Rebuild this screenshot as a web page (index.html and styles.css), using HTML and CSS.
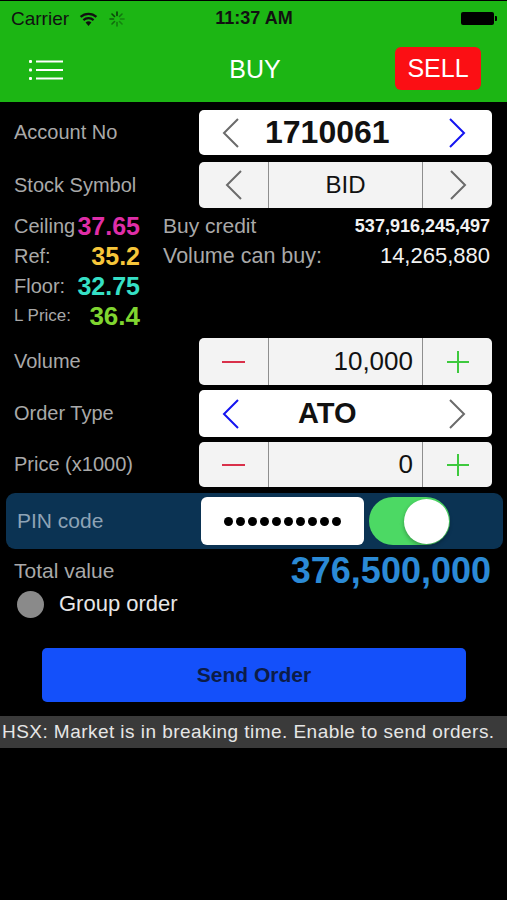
FILE: index.html
```html
<!DOCTYPE html>
<html lang="en">
<head>
    <meta charset="UTF-8">
    <meta name="viewport" content="width=device-width, initial-scale=1.0">
    <title>Buy Order</title>
    <link rel="stylesheet" href="styles.css">
</head>
<body>
    <header class="top">
        <div class="status">
            <div class="status-left">
                <span class="carrier">Carrier</span>
                <svg class="wifi" width="19" height="15" viewBox="0 0 19 15">
                    <path d="M9.5 15 L6.6 11.6 A4.4 4.4 0 0 1 12.4 11.6 Z" fill="#111"/>
                    <path d="M4.4 9.1 A7.6 7.6 0 0 1 14.6 9.1" stroke="#111" stroke-width="2.2" fill="none"/>
                    <path d="M1.6 5.9 A11.6 11.6 0 0 1 17.4 5.9" stroke="#111" stroke-width="2.2" fill="none"/>
                </svg>
                <svg class="spinner" width="16" height="16" viewBox="0 0 16 16">
                    <g stroke="#0a3a0a" stroke-width="1.6" stroke-linecap="round">
                        <line x1="8" y1="1" x2="8" y2="4.5"/>
                        <line x1="8" y1="11.5" x2="8" y2="15" opacity="0.5"/>
                        <line x1="1" y1="8" x2="4.5" y2="8" opacity="0.7"/>
                        <line x1="11.5" y1="8" x2="15" y2="8" opacity="0.4"/>
                        <line x1="3" y1="3" x2="5.5" y2="5.5" opacity="0.9"/>
                        <line x1="10.5" y1="10.5" x2="13" y2="13" opacity="0.4"/>
                        <line x1="13" y1="3" x2="10.5" y2="5.5" opacity="0.5"/>
                        <line x1="3" y1="13" x2="5.5" y2="10.5" opacity="0.6"/>
                    </g>
                </svg>
            </div>
            <span class="clock">11:37 AM</span>
            <div class="status-right">
                <span class="battery"></span>
            </div>
        </div>
        <nav class="nav">
            <svg class="menu" width="34" height="20" viewBox="0 0 34 20">
                <g fill="#fff">
                    <rect x="0" y="0" width="3" height="3" rx="1"/>
                    <rect x="0" y="8.5" width="3" height="3" rx="1"/>
                    <rect x="0" y="17" width="3" height="3" rx="1"/>
                </g>
                <g stroke="#fff" stroke-width="2">
                    <line x1="7" y1="1.5" x2="34" y2="1.5"/>
                    <line x1="7" y1="10" x2="34" y2="10"/>
                    <line x1="7" y1="18.5" x2="34" y2="18.5"/>
                </g>
            </svg>
            <span class="nav-title">BUY</span>
            <div class="nav-right">
                <button class="sell-btn">SELL</button>
            </div>
        </nav>
    </header>

    <main class="form">
        <div class="row row-account">
            <span class="label">Account No</span>
            <div class="picker picker-white">
                <svg class="chev" width="18" height="30" viewBox="0 0 18 30"><polyline points="16,1 2,15 16,29" stroke="#6b6b6b" stroke-width="2" fill="none"/></svg>
                <span class="picker-value account-value">1710061</span>
                <svg class="chev chev-right" width="18" height="30" viewBox="0 0 18 30"><polyline points="2,1 16,15 2,29" stroke="#1414f0" stroke-width="2" fill="none"/></svg>
            </div>
        </div>

        <div class="row row-stock">
            <span class="label">Stock Symbol</span>
            <div class="stepper">
                <div class="cell"><svg width="18" height="30" viewBox="0 0 18 30"><polyline points="16,1 2,15 16,29" stroke="#6b6b6b" stroke-width="2" fill="none"/></svg></div>
                <div class="cell cell-mid symbol">BID</div>
                <div class="cell"><svg width="18" height="30" viewBox="0 0 18 30"><polyline points="2,1 16,15 2,29" stroke="#6b6b6b" stroke-width="2" fill="none"/></svg></div>
            </div>
        </div>

        <div class="info">
            <div class="prices">
                <div class="price-line"><span class="label">Ceiling</span><span class="num ceiling">37.65</span></div>
                <div class="price-line"><span class="label">Ref:</span><span class="num ref">35.2</span></div>
                <div class="price-line"><span class="label">Floor:</span><span class="num floor">32.75</span></div>
                <div class="price-line"><span class="label label-small">L Price:</span><span class="num last">36.4</span></div>
            </div>
            <div class="credit">
                <div class="credit-line"><span class="label label-wide">Buy credit</span><span class="credit-num">537,916,245,497</span></div>
                <div class="credit-line"><span class="label label-wider">Volume can buy:</span><span class="can-buy">14,265,880</span></div>
            </div>
        </div>

        <div class="row row-volume">
            <span class="label">Volume</span>
            <div class="stepper">
                <div class="cell"><span class="minus"></span></div>
                <div class="cell cell-mid amount">10,000</div>
                <div class="cell"><span class="plus"></span></div>
            </div>
        </div>

        <div class="row row-type">
            <span class="label">Order Type</span>
            <div class="picker picker-white">
                <svg class="chev" width="18" height="30" viewBox="0 0 18 30"><polyline points="16,1 2,15 16,29" stroke="#1414f0" stroke-width="2" fill="none"/></svg>
                <span class="picker-value type-value">ATO</span>
                <svg class="chev chev-right" width="18" height="30" viewBox="0 0 18 30"><polyline points="2,1 16,15 2,29" stroke="#6b6b6b" stroke-width="2" fill="none"/></svg>
            </div>
        </div>

        <div class="row row-price">
            <span class="label">Price (x1000)</span>
            <div class="stepper">
                <div class="cell"><span class="minus"></span></div>
                <div class="cell cell-mid amount">0</div>
                <div class="cell"><span class="plus"></span></div>
            </div>
        </div>

        <div class="pin-panel">
            <span class="pin-label">PIN code</span>
            <div class="pin-input">
                <span class="dot"></span><span class="dot"></span><span class="dot"></span><span class="dot"></span><span class="dot"></span>
                <span class="dot"></span><span class="dot"></span><span class="dot"></span><span class="dot"></span><span class="dot"></span>
            </div>
            <div class="toggle"><span class="knob"></span></div>
        </div>

        <div class="total">
            <span class="label label-wide">Total value</span>
            <span class="total-num">376,500,000</span>
        </div>

        <div class="group">
            <span class="radio"></span>
            <span class="group-text">Group order</span>
        </div>

        <button class="send-btn">Send Order</button>
    </main>

    <div class="message">HSX: Market is in breaking time. Enable to send orders.</div>
</body>
</html>
```

FILE: styles.css
```css
body {
    font-family: "Liberation Sans", Arial, sans-serif;
    margin: 0;
    padding: 0;
    background-color: #000;
    color: #fff;
    width: 507px;
}
.top {
    background: #1cb614;
    border-top: 1px solid #000;
}
.status {
    height: 35px;
    display: grid;
    grid-template-columns: 1fr auto 1fr;
    align-items: center;
    padding: 0 10px 0 11px;
    color: #111;
}
.status-left {
    display: flex;
    align-items: center;
}
.carrier {
    font-size: 19px;
}
.wifi {
    margin-left: 10px;
}
.spinner {
    margin-left: 11px;
}
.clock {
    font-size: 18px;
    font-weight: bold;
}
.status-right {
    display: flex;
    justify-content: flex-end;
}
.battery {
    position: relative;
    width: 33px;
    height: 13px;
    background: #000;
    border-radius: 2px;
    margin-right: 3px;
}
.battery::after {
    content: "";
    position: absolute;
    right: -3px;
    top: 4px;
    width: 2px;
    height: 5px;
    background: #000;
    border-radius: 0 1px 1px 0;
}
.nav {
    height: 66px;
    display: grid;
    grid-template-columns: 1fr auto 1fr;
    align-items: center;
    padding: 0 26px 0 29px;
}
.menu {
    display: block;
    margin-top: 1px;
}
.nav-title {
    font-size: 25px;
}
.nav-right {
    display: flex;
    justify-content: flex-end;
}
.sell-btn {
    font-family: inherit;
    font-size: 25px;
    color: #fff;
    background: #fb0f14;
    border: none;
    border-radius: 6px;
    width: 86px;
    height: 43px;
    padding: 0;
    margin-top: -2px;
}

.form {
    padding-top: 8px;
}
.row {
    display: grid;
    grid-template-columns: 185px 293px;
    align-items: center;
    margin: 0 15px 0 14px;
}
.label {
    font-size: 20px;
    color: #a9a9a9;
}
.label-small {
    font-size: 17px;
}
.label-wide {
    font-size: 21px;
}
.label-wider {
    font-size: 21.5px;
}
.picker {
    display: flex;
    align-items: center;
    border-radius: 5px;
    padding: 0 26px 0 23px;
    color: #111;
}
.picker-white {
    background: #fff;
}
.chev-right {
    margin-left: auto;
}
.row-account .picker {
    height: 45px;
}
.account-value {
    font-size: 32px;
    font-weight: bold;
    margin-left: 25px;
}
.row-stock {
    margin-top: 7px;
}
.stepper {
    display: grid;
    grid-template-columns: 69px 1fr 69px;
    background: #f3f3f3;
    border-radius: 5px;
    color: #111;
}
.row-stock .stepper {
    height: 46px;
}
.cell {
    display: flex;
    align-items: center;
    justify-content: center;
}
.cell-mid {
    border-left: 1px solid #8e8e8e;
    border-right: 1px solid #8e8e8e;
}
.symbol {
    font-size: 24px;
}
.info {
    display: grid;
    grid-template-columns: 126px 1fr;
    column-gap: 23px;
    margin: 3px 17px 0 14px;
}
.price-line, .credit-line {
    display: flex;
    justify-content: space-between;
    align-items: center;
    height: 30px;
}
.num {
    font-size: 25px;
    font-weight: bold;
}
.ceiling { color: #df2ea8; }
.ref { color: #f7c63a; }
.floor { color: #36e0c6; }
.last { color: #80d630; font-size: 26px; }
.credit-num {
    font-size: 18px;
    font-weight: bold;
    color: #f2f2f2;
}
.can-buy {
    font-size: 22px;
    color: #f2f2f2;
}
.row-volume {
    margin-top: 7px;
}
.row-volume .stepper, .row-type .picker {
    height: 47px;
}
.row-type, .row-price {
    margin-top: 5px;
}
.row-price .stepper {
    height: 45px;
}
.amount {
    justify-content: flex-end;
    padding-right: 9px;
    font-size: 26px;
}
.type-value {
    font-size: 29px;
    font-weight: bold;
    margin-left: 58px;
}
.minus {
    width: 23px;
    height: 2px;
    background: #d9304a;
}
.plus {
    position: relative;
    width: 22px;
    height: 22px;
}
.plus::before, .plus::after {
    content: "";
    position: absolute;
    background: #3ec93e;
}
.plus::before {
    left: 0;
    top: 10px;
    width: 22px;
    height: 2px;
}
.plus::after {
    left: 10px;
    top: 0;
    width: 2px;
    height: 22px;
}

.pin-panel {
    display: flex;
    align-items: center;
    height: 56px;
    margin: 6px 4px 0 6px;
    padding-left: 11px;
    background: #0b3353;
    border-radius: 9px;
}
.pin-label {
    width: 184px;
    font-size: 21px;
    color: #8ea3b6;
}
.pin-input {
    display: flex;
    align-items: center;
    justify-content: center;
    gap: 3px;
    width: 163px;
    height: 48px;
    background: #fff;
    border-radius: 6px;
}
.dot {
    width: 9px;
    height: 9px;
    border-radius: 50%;
    background: #000;
}
.toggle {
    display: flex;
    justify-content: flex-end;
    align-items: center;
    width: 81px;
    height: 48px;
    margin-left: 5px;
    background: #4cd964;
    border-radius: 24px;
}
.knob {
    width: 45px;
    height: 45px;
    margin-right: 1px;
    background: #fff;
    border-radius: 50%;
    box-shadow: 0 2px 4px rgba(0, 0, 0, 0.3);
}
.total {
    display: flex;
    justify-content: space-between;
    align-items: center;
    height: 36px;
    margin: 4px 16px 0 14px;
}
.total-num {
    font-size: 36px;
    font-weight: bold;
    color: #2b8ad6;
}
.group {
    display: flex;
    align-items: center;
    height: 30px;
    margin-left: 17px;
}
.radio {
    width: 27px;
    height: 27px;
    border-radius: 50%;
    background: #8a8a8a;
}
.group-text {
    font-size: 22px;
    color: #e6e6e6;
    margin-left: 15px;
}
.send-btn {
    display: block;
    width: 424px;
    height: 54px;
    margin: 29px 0 0 42px;
    font-family: inherit;
    font-size: 21px;
    font-weight: bold;
    color: #0c1c48;
    background: #1450fa;
    border: none;
    border-radius: 5px;
}
.message {
    margin-top: 14px;
    height: 32px;
    line-height: 32px;
    padding-left: 2px;
    background: #3a3a3a;
    color: #e6e6e6;
    font-size: 19px;
    letter-spacing: 0.45px;
    white-space: nowrap;
}
```
